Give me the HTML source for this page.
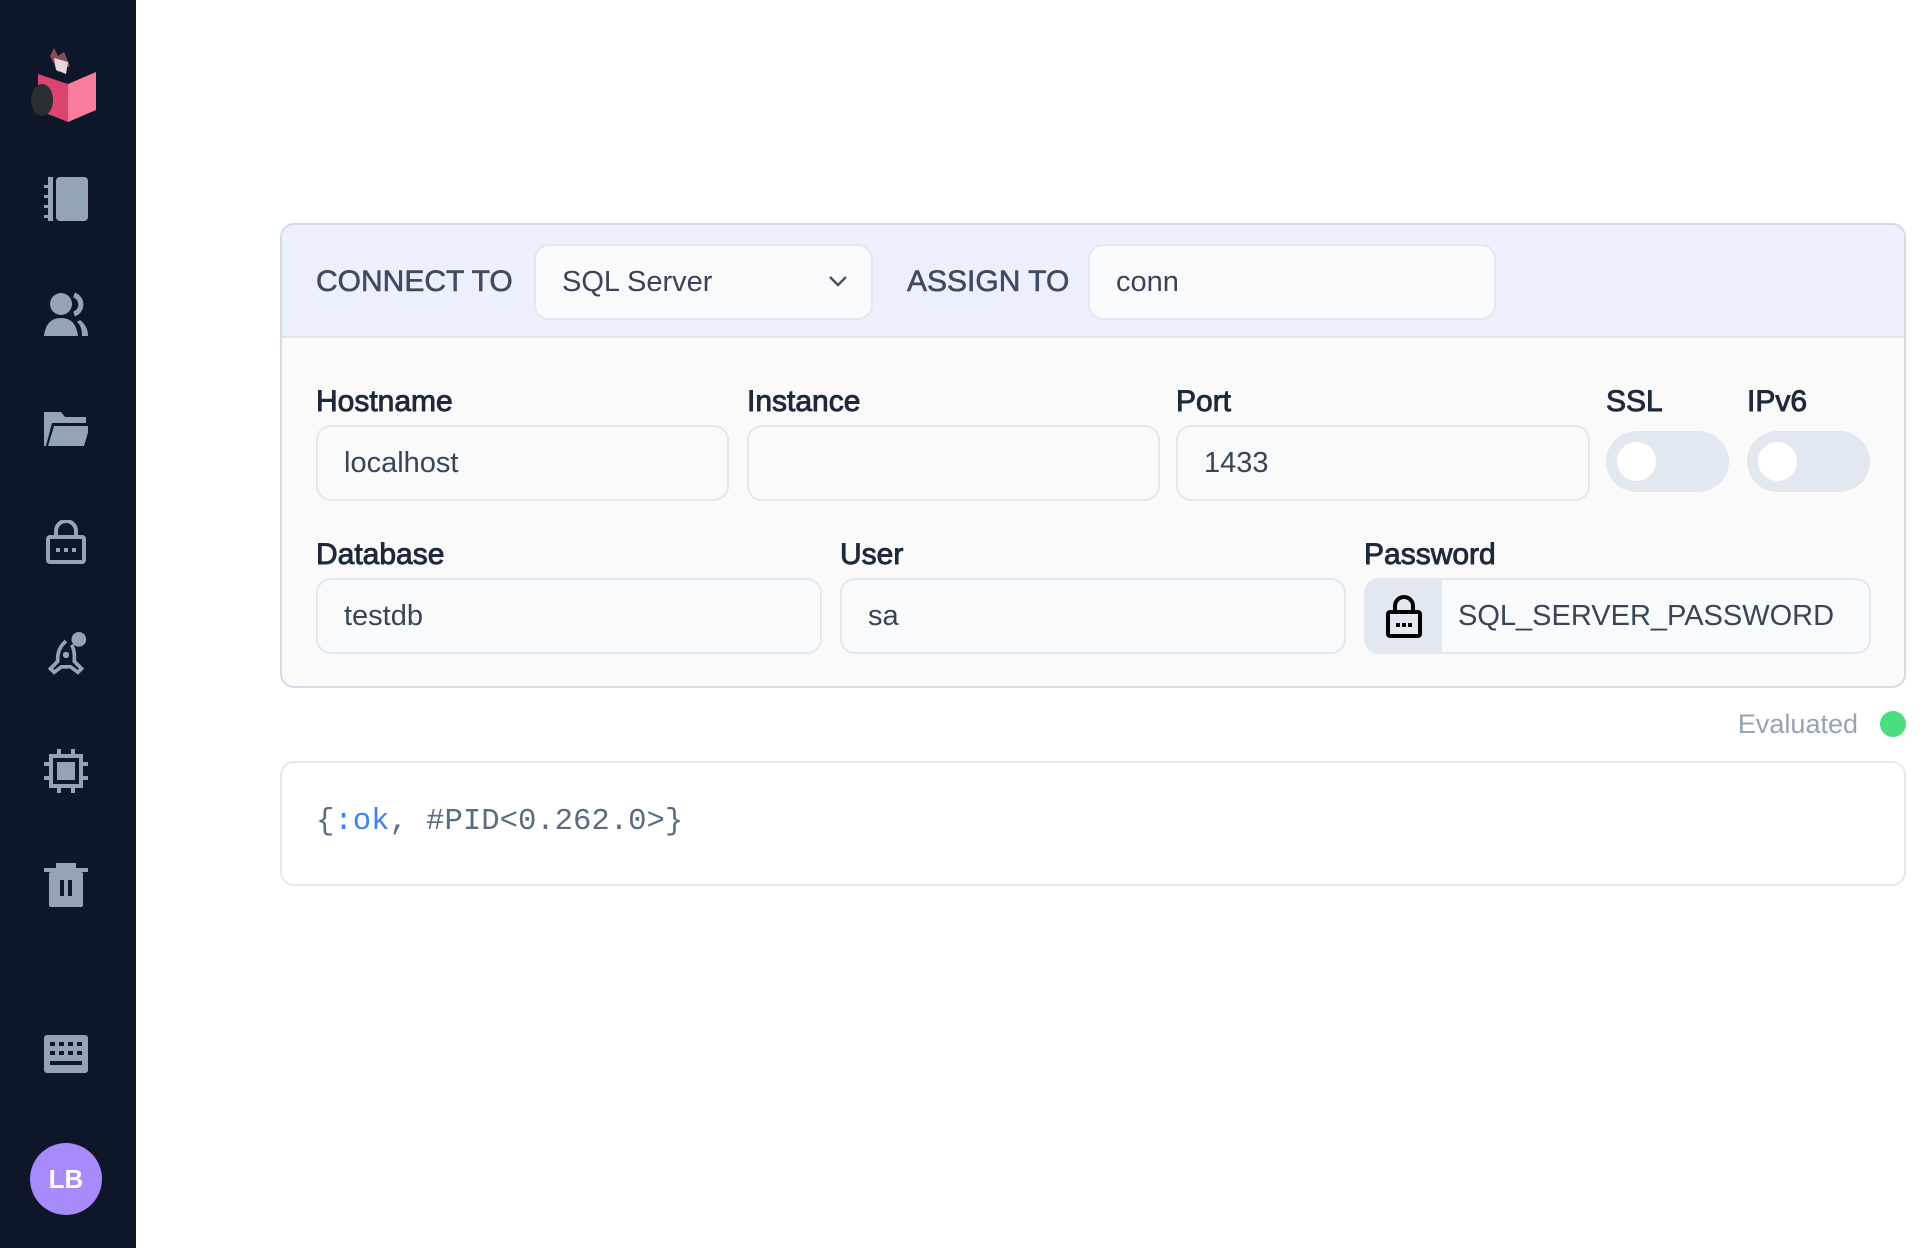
<!DOCTYPE html>
<html><head><meta charset="utf-8"><style>
*{box-sizing:border-box;margin:0;padding:0}
body{width:1926px;height:1248px;background:#fff;font-family:"Liberation Sans",sans-serif;position:relative;overflow:hidden}
.sb{position:absolute;left:0;top:0;width:136px;height:1248px;background:#0e1729}
.ic{position:absolute;left:44px;width:44px;height:44px}
.box{position:absolute;left:280px;top:223px;width:1626px;height:465px;border:2px solid #d3dbe6;border-radius:14px;background:#fafafa;overflow:hidden}
.hdr{position:absolute;left:0;top:0;right:0;height:113px;background:#ecf0fd;border-bottom:2px solid #dfe5f0}
.t{position:absolute;white-space:nowrap}
.lab{font-size:30px;color:#1e293b;font-weight:normal;-webkit-text-stroke:0.9px #1e293b}
.hl{font-size:30px;color:#3f4b5e;-webkit-text-stroke:0.6px #3f4b5e}
.in{position:absolute;background:#f8fafc;border:2px solid #e2e8f0;border-radius:15px;font-size:29px;color:#384559;padding-left:26px;display:flex;align-items:center}
.tg{position:absolute;width:123px;height:61px;border-radius:31px;background:#e2e8f0}
.tg::after{content:"";position:absolute;left:11px;top:11px;width:39px;height:39px;border-radius:50%;background:#fff}
</style></head><body>
<div class="sb">
<svg style="position:absolute;left:28px;top:46px" width="70" height="78" viewBox="0 0 70 78">
<path d="M22 10 L26 2 L30 10 L36 6 L42 20 L30 26 Z" fill="#8a4a5e"/>
<path d="M26 12 L40 16 L38 28 L28 24Z" fill="#e8d6da"/>
<path d="M10 28 L40 38 L40 76 L10 64Z" fill="#d9456f"/>
<path d="M40 38 L68 26 L68 64 L40 76Z" fill="#fb7d9e"/>
<ellipse cx="14" cy="54" rx="11" ry="16" fill="#2a2d30"/>
</svg>
<svg class="ic" style="top:177px" viewBox="0 0 44 44"><rect x="12" y="0" width="32" height="44" rx="4" fill="#94a3b8"/><rect x="4" y="0" width="5" height="44" fill="#94a3b8"/><rect x="0" y="8" width="8" height="3" fill="#94a3b8"/><rect x="0" y="18" width="8" height="3" fill="#94a3b8"/><rect x="0" y="28" width="8" height="3" fill="#94a3b8"/><rect x="0" y="38" width="8" height="3" fill="#94a3b8"/><rect x="9" y="0" width="3" height="44" fill="#0e1729"/></svg>
<svg class="ic" style="top:292px" viewBox="0 0 44 44"><circle cx="17" cy="12" r="11" fill="#94a3b8"/><path d="M0 44 Q2 26 17 26 Q32 26 34 44Z" fill="#94a3b8"/><path d="M30 3 A10 10 0 0 1 30 22" stroke="#94a3b8" stroke-width="5" fill="none"/><path d="M36 28 Q44 34 44 44 L38 44 Q38 34 33 30Z" fill="#94a3b8"/></svg>
<svg class="ic" style="top:408px" viewBox="0 0 44 44"><path d="M0 4 H17 L21 9 H42 V15 H8 L2 38 H0Z" fill="#94a3b8"/><path d="M10 18 H46 L40 38 H4Z" fill="#94a3b8"/></svg>
<svg class="ic" style="top:520px" viewBox="0 0 44 44"><path d="M12 17 V11 A10 10 0 0 1 32 11 V17" stroke="#94a3b8" stroke-width="4" fill="none"/><rect x="4" y="17" width="36" height="25" rx="2" stroke="#94a3b8" stroke-width="4" fill="none"/><rect x="12" y="28" width="4" height="4" fill="#94a3b8"/><rect x="20" y="28" width="4" height="4" fill="#94a3b8"/><rect x="28" y="28" width="4" height="4" fill="#94a3b8"/></svg>
<svg class="ic" style="top:632px" viewBox="0 0 44 48"><path d="M22 10 Q12 18 13 32 L5 40 L9 44 L17 38 H27 L35 44 L39 40 L31 32 Q32 20 28 14" stroke="#94a3b8" stroke-width="4" fill="none"/><circle cx="22" cy="25" r="3.5" fill="#94a3b8"/><circle cx="36" cy="8" r="8" fill="#94a3b8"/></svg>
<svg class="ic" style="top:749px" viewBox="0 0 44 44"><rect x="7" y="7" width="30" height="30" stroke="#94a3b8" stroke-width="4" fill="none"/><rect x="13" y="13" width="18" height="18" fill="#94a3b8"/><g fill="#94a3b8"><rect x="13" y="0" width="4" height="6"/><rect x="27" y="0" width="4" height="6"/><rect x="13" y="38" width="4" height="6"/><rect x="27" y="38" width="4" height="6"/><rect x="0" y="13" width="6" height="4"/><rect x="0" y="27" width="6" height="4"/><rect x="38" y="13" width="6" height="4"/><rect x="38" y="27" width="6" height="4"/></g></svg>
<svg class="ic" style="top:863px" viewBox="0 0 44 44"><rect x="0" y="5" width="44" height="4" fill="#94a3b8"/><rect x="12" y="0" width="20" height="6" fill="#94a3b8"/><rect x="5" y="9" width="34" height="35" rx="2" fill="#94a3b8"/><rect x="16" y="17" width="4" height="16" fill="#0e1729"/><rect x="24" y="17" width="4" height="16" fill="#0e1729"/></svg>
<svg class="ic" style="top:1032px" viewBox="0 0 44 44"><rect x="0" y="3" width="44" height="38" rx="3" fill="#94a3b8"/><g fill="#0e1729"><rect x="6" y="10" width="5" height="4"/><rect x="15" y="10" width="5" height="4"/><rect x="24" y="10" width="5" height="4"/><rect x="33" y="10" width="5" height="4"/><rect x="6" y="19" width="5" height="4"/><rect x="15" y="19" width="5" height="4"/><rect x="24" y="19" width="5" height="4"/><rect x="33" y="19" width="5" height="4"/><rect x="6" y="29" width="32" height="4"/></g></svg>
<div style="position:absolute;left:30px;top:1143px;width:72px;height:72px;border-radius:50%;background:#a78bfa;color:#fff;font-weight:bold;font-size:26px;display:flex;align-items:center;justify-content:center">LB</div>
</div>

<div class="box">
<div class="hdr">
<div class="t hl" style="left:34px;top:40px">CONNECT TO</div>
<div class="in" style="left:252px;top:19px;width:339px;height:76px;background:#f8fafc">SQL Server<svg style="position:absolute;right:22px;top:28px" width="22" height="14" viewBox="0 0 22 14"><path d="M3 3 L11 11 L19 3" stroke="#475569" stroke-width="2.5" fill="none"/></svg></div>
<div class="t hl" style="left:625px;top:40px">ASSIGN TO</div>
<div class="in" style="left:806px;top:19px;width:408px;height:76px">conn</div>
</div>
<div class="t lab" style="left:34px;top:160px">Hostname</div>
<div class="t lab" style="left:465px;top:160px">Instance</div>
<div class="t lab" style="left:894px;top:160px">Port</div>
<div class="t lab" style="left:1324px;top:160px">SSL</div>
<div class="t lab" style="left:1465px;top:160px">IPv6</div>
<div class="in" style="left:34px;top:200px;width:413px;height:76px">localhost</div>
<div class="in" style="left:465px;top:200px;width:413px;height:76px"></div>
<div class="in" style="left:894px;top:200px;width:414px;height:76px">1433</div>
<div class="tg" style="left:1324px;top:206px"></div>
<div class="tg" style="left:1465px;top:206px"></div>
<div class="t lab" style="left:34px;top:313px">Database</div>
<div class="t lab" style="left:558px;top:313px">User</div>
<div class="t lab" style="left:1082px;top:313px">Password</div>
<div class="in" style="left:34px;top:353px;width:506px;height:76px">testdb</div>
<div class="in" style="left:558px;top:353px;width:506px;height:76px">sa</div>
<div class="in" style="left:1082px;top:353px;width:507px;height:76px;padding-left:0;overflow:hidden">
<div style="width:76px;height:76px;background:#e2e8f0;display:flex;align-items:center;justify-content:center;flex:none"><svg width="38" height="44" viewBox="0 0 38 44"><path d="M10 18 V12 A9 9 0 0 1 28 12 V18" stroke="#000" stroke-width="4" fill="none"/><rect x="3" y="18" width="32" height="24" rx="2" stroke="#000" stroke-width="4" fill="none"/><rect x="11" y="29" width="4" height="4"/><rect x="17" y="29" width="4" height="4"/><rect x="23" y="29" width="4" height="4"/></svg></div>
<span style="margin-left:16px">SQL_SERVER_PASSWORD</span></div>
</div>

<div class="t" style="right:68px;top:709px;font-size:27px;color:#94a3b8">Evaluated</div>
<div style="position:absolute;left:1880px;top:711px;width:26px;height:26px;border-radius:50%;background:#4ade80"></div>

<div style="position:absolute;left:280px;top:761px;width:1626px;height:125px;border:2px solid #e2e8f0;border-radius:14px;background:#fff">
<div class="t" style="left:34px;top:42px;font-family:'Liberation Mono',monospace;font-size:30.6px;color:#5b6b82">{<span style="color:#3b82f6">:ok</span>, #PID&lt;0.262.0&gt;}</div>
</div>
</body></html>
